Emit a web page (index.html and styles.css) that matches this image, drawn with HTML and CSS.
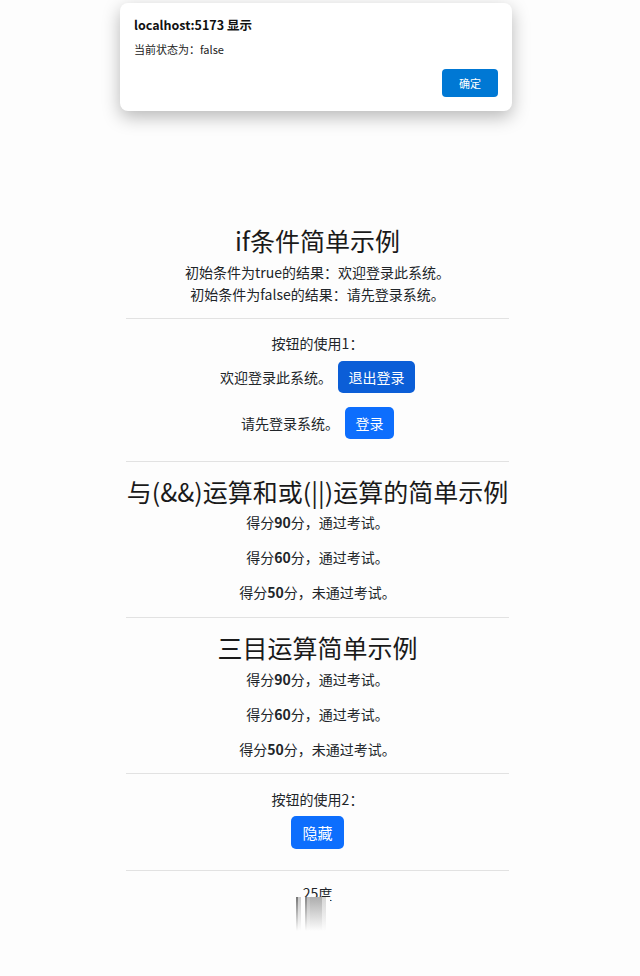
FILE: index.html
```html
<!DOCTYPE html>
<html lang="zh-CN">
<head>
    <meta charset="UTF-8">
    <meta name="viewport" content="width=device-width, initial-scale=1.0">
    <title>条件渲染示例</title>
    <link rel="stylesheet" href="styles.css">
</head>
<body>
    <!-- browser alert -->
    <div class="alert-box">
        <div class="alert-title">localhost:5173 显示</div>
        <div class="alert-msg">当前状态为：false</div>
        <div class="alert-actions">
            <button class="alert-btn">确定</button>
        </div>
    </div>

    <div class="app">
        <section class="block first">
            <h1 class="title">if条件简单示例</h1>
            <div class="desc">
                <div>初始条件为true的结果：欢迎登录此系统。</div>
                <div>初始条件为false的结果：请先登录系统。</div>
            </div>
        </section>
        <hr class="line">

        <section class="block btn-block">
            <div class="label">按钮的使用1：</div>
            <div class="row row-1">
                <span>欢迎登录此系统。</span>
                <button class="btn btn-hover">退出登录</button>
            </div>
            <div class="row row-2">
                <span>请先登录系统。</span>
                <button class="btn">登录</button>
            </div>
        </section>
        <hr class="line">

        <section class="block score-block">
            <h1 class="title">与(&amp;&amp;)运算和或(||)运算的简单示例</h1>
            <p class="score">得分<b>90</b>分，通过考试。</p>
            <p class="score">得分<b>60</b>分，通过考试。</p>
            <p class="score">得分<b>50</b>分，未通过考试。</p>
        </section>
        <hr class="line">

        <section class="block score-block third">
            <h1 class="title">三目运算简单示例</h1>
            <p class="score">得分<b>90</b>分，通过考试。</p>
            <p class="score">得分<b>60</b>分，通过考试。</p>
            <p class="score">得分<b>50</b>分，未通过考试。</p>
        </section>
        <hr class="line">

        <section class="block hide-block">
            <div class="label">按钮的使用2：</div>
            <button class="btn btn-tall">隐藏</button>
        </section>
        <hr class="line">

        <section class="block temp-block">
            <div class="temp">25度</div>
            <div class="smear"></div>
        </section>
    </div>
</body>
</html>
```

FILE: styles.css
```css
body {
    margin: 0;
    background-color: #fdfdfd;
    font-family: "Noto Sans CJK SC", "Noto Sans", sans-serif;
    color: #212529;
    font-size: 14px;
    line-height: 22px;
    position: relative;
}

/* alert dialog over the page */
.alert-box {
    position: absolute;
    top: 3px;
    left: 120px;
    width: 392px;
    height: 108px;
    box-sizing: border-box;
    padding: 14px 14px 0 14px;
    background: #fff;
    border-radius: 8px;
    box-shadow: 0 6px 18px rgba(0, 0, 0, 0.28);
    z-index: 10;
}

.alert-title {
    font-size: 12.5px;
    font-weight: bold;
    line-height: 16px;
    color: #111;
}

.alert-msg {
    margin-top: 9px;
    font-size: 11px;
    line-height: 14px;
    color: #222;
}

.alert-actions {
    display: flex;
    justify-content: flex-end;
    margin-top: 13px;
}

.alert-btn {
    width: 56px;
    height: 28px;
    border: none;
    border-radius: 4px;
    background: #0078d4;
    color: #fff;
    font-family: "Noto Sans CJK SC", sans-serif;
    font-size: 11px;
}

/* page content */
.app {
    width: 383px;
    margin-left: 126px;
    padding-top: 225px;
    text-align: center;
}

.line {
    margin: 0;
    border: none;
    border-top: 1px solid #e2e2e2;
}

.title {
    margin: 0;
    font-size: 25px;
    font-weight: normal;
    line-height: 30px;
    white-space: nowrap;
    color: #1a1a1a;
}

.block.first {
    padding-bottom: 13px;
}

.desc {
    margin-top: 6px;
}

.btn-block {
    padding: 13px 0 22px;
}

.row {
    display: flex;
    justify-content: center;
    align-items: center;
    gap: 6px;
}

.row-1 {
    margin-top: 7px;
}

.row-2 {
    margin-top: 14px;
}

.btn {
    height: 32px;
    padding: 0 10.5px;
    border: none;
    border-radius: 5px;
    background: #0d6efd;
    color: #fff;
    font-family: "Noto Sans CJK SC", sans-serif;
    font-size: 14px;
    line-height: 32px;
}

.btn-hover {
    background: #0b5ed7;
}

.btn-tall {
    height: 33px;
    padding: 0 11.5px;
    margin-top: 6px;
    font-size: 15px;
}

.score-block {
    padding: 14px 0 14px;
}

.score-block.third {
    padding-bottom: 13px;
}

.score {
    margin: 13px 0 0;
}

.score-block .title + .score {
    margin-top: 5px;
}

.third .title + .score {
    margin-top: 6px;
}

.score b {
    font-weight: bold;
}

.hide-block {
    padding: 14px 0 21px;
}

.temp-block {
    padding-top: 11px;
}

.smear {
    width: 34px;
    height: 34px;
    margin: -7px auto 0;
    position: relative;
    left: -5px;
    background:
        linear-gradient(to bottom, rgba(253, 253, 253, 0.2), #fdfdfd),
        linear-gradient(to right, #555 0 2px, #bbb 2px 5px, #fdfdfd 5px 9px, #666 9px 11px, #aaa 11px 14px, #999 14px 26px, #ccc 26px 30px, #fdfdfd 30px);
}
```
